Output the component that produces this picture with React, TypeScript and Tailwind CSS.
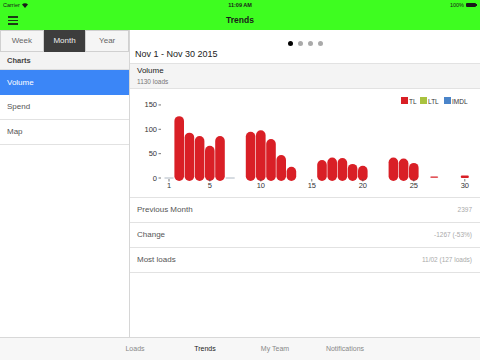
import React from "react";

const font = { fontFamily: '"Liberation Sans", Arial, sans-serif' };

// daily loads for Nov 2015 (0 = no bar)
const loads = [0, 127, 93, 86, 66, 86, 0, 0, 95, 98, 80, 47, 23, 0, 0, 37, 42, 41, 29, 25, 0, 0, 42, 40, 31, 0, 1, 0, 0, 3];
const greyLines = [1, 7];

const dayX = (d: number) => 39 + (d - 1) * 10.2;
const ZERO = 89;
const SCALE = 0.487;

function VolumeChart() {
  return (
    <svg width="350" height="108" viewBox="0 0 350 108" className="block">
      {[150, 100, 50, 0].map((v) => {
        const y = ZERO - v * SCALE;
        return (
          <g key={v}>
            <text x="27" y={y + 2.5} fontSize="7.5" textAnchor="end" fill="#333">
              {v}
            </text>
            <line x1="28.5" x2="31" y1={y} y2={y} stroke="#555" strokeWidth="0.8" />
          </g>
        );
      })}
      {greyLines.map((d) => (
        <line key={d} x1={dayX(d) - 4.5} x2={dayX(d) + 4.5} y1={ZERO} y2={ZERO} stroke="#9aa6b4" strokeWidth="0.8" />
      ))}
      {loads.map((v, i) => {
        if (!v) return null;
        const d = i + 1;
        const top = ZERO - v * SCALE;
        if (v < 5) {
          return <rect key={d} x={dayX(d) - 4} y={top - 1} width="8" height={d === 30 ? 2.5 : 1.2} rx="1" fill="#d91f26" />;
        }
        return <rect key={d} x={dayX(d) - 4.8} y={top} width="9.6" height={ZERO + 3 - top} rx="4.8" fill="#d91f26" />;
      })}
      {[1, 5, 10, 15, 20, 25, 30].map((d) => (
        <g key={d}>
          <line x1={dayX(d)} x2={dayX(d)} y1={ZERO + 1} y2={ZERO + 3.5} stroke="#555" strokeWidth="0.8" />
          <text x={dayX(d)} y={ZERO + 10} fontSize="7.5" textAnchor="middle" fill="#333">
            {d}
          </text>
        </g>
      ))}
      <g fontSize="6.5" fill="#333">
        <rect x="271" y="8" width="7" height="7" fill="#d91f26" />
        <text x="279" y="14.5">TL</text>
        <rect x="290" y="8" width="7" height="7" fill="#a9c23f" />
        <text x="298" y="14.5">LTL</text>
        <rect x="314" y="8" width="7" height="7" fill="#4a84c9" />
        <text x="322" y="14.5">IMDL</text>
      </g>
    </svg>
  );
}

function StatRow({ label, value }: { label: string; value: string }) {
  return (
    <div className="flex h-[25px] items-center justify-between border-b border-[#e2e2e2] pl-[7px] pr-[8px]">
      <span className="text-[8px] text-[#555]">{label}</span>
      <span className="text-[6.5px] text-[#aaa]">{value}</span>
    </div>
  );
}

export default function App() {
  const tabs = ["Loads", "Trends", "My Team", "Notifications"];
  return (
    <div className="flex h-[360px] w-[480px] flex-col overflow-hidden bg-white" style={font}>
      <div className="h-[30px] bg-[#3efd20]">
        <div className="relative flex h-[10px] items-center justify-between px-[3px] text-[5.5px] text-[#1a1a1a]">
          <span className="flex items-center gap-[2px]">
            Carrier
            <svg width="6" height="5" viewBox="0 0 6 5">
              <path d="M0 1.6 A4 4 0 0 1 6 1.6 L3 5 Z" fill="#1a1a1a" />
            </svg>
          </span>
          <span className="absolute left-1/2 -translate-x-1/2 font-bold">11:09 AM</span>
          <span className="flex items-center gap-[2px]">
            100%
            <span className="flex items-center">
              <span className="h-[4px] w-[10px] rounded-[1px] bg-[#1a1a1a]" />
              <span className="h-[2px] w-[1px] bg-[#1a1a1a]" />
            </span>
          </span>
        </div>
        <div className="relative flex h-[20px] items-center justify-center">
          <div className="absolute left-[8px] top-[6px] flex flex-col gap-[2px]">
            <span className="h-[1.5px] w-[10px] bg-[#1d3a16]" />
            <span className="h-[1.5px] w-[10px] bg-[#1d3a16]" />
            <span className="h-[1.5px] w-[10px] bg-[#1d3a16]" />
          </div>
          <span className="text-[8.5px] font-bold text-[#1a1a1a]">Trends</span>
        </div>
      </div>

      <div className="flex flex-1">
        <div className="w-[130px] border-r border-[#d6d6d6]">
          <div className="flex h-[22px] text-[8px]">
            <div className="flex flex-1 items-center justify-center border border-[#d0d0d0] bg-[#f5f5f5] text-[#666]">Week</div>
            <div className="flex flex-1 items-center justify-center bg-[#3d3d3d] text-[#eee]">Month</div>
            <div className="flex flex-1 items-center justify-center border border-[#d0d0d0] bg-[#f5f5f5] text-[#666]">Year</div>
          </div>
          <div className="flex h-[18px] items-center border-b border-[#ddd] bg-[#f3f3f3] pl-[7px] text-[7.5px] font-bold text-[#444]">
            Charts
          </div>
          <div className="flex h-[25px] items-center bg-[#3b86f7] pl-[7px] text-[8px] text-white">Volume</div>
          <div className="flex h-[25px] items-center border-b border-[#e2e2e2] pl-[7px] text-[8px] text-[#555]">Spend</div>
          <div className="flex h-[25px] items-center border-b border-[#e2e2e2] pl-[7px] text-[8px] text-[#555]">Map</div>
        </div>

        <div className="flex-1">
          <div className="flex h-[17px] items-end justify-center gap-[5px] pb-[1px]">
            <span className="h-[5px] w-[5px] rounded-full bg-black" />
            <span className="h-[5px] w-[5px] rounded-full bg-[#aaa]" />
            <span className="h-[5px] w-[5px] rounded-full bg-[#aaa]" />
            <span className="h-[5px] w-[5px] rounded-full bg-[#aaa]" />
          </div>
          <div className="flex h-[15px] items-center pl-[5px] text-[9px] text-[#222]">Nov 1 - Nov 30 2015</div>
          <div className="mt-[1px] border-t border-[#e2e2e2]">
            <div className="flex h-[25px] flex-col justify-center border-b border-[#e2e2e2] bg-[#f4f4f4] pl-[7px]">
              <span className="text-[8px] text-[#222]">Volume</span>
              <span className="text-[6.5px] text-[#777]">1130 loads</span>
            </div>
            <div className="border-b border-[#e2e2e2]">
              <VolumeChart />
            </div>
            <StatRow label="Previous Month" value="2397" />
            <StatRow label="Change" value="-1267 (-53%)" />
            <StatRow label="Most loads" value="11/02 (127 loads)" />
          </div>
        </div>
      </div>

      <div className="flex h-[23px] items-center border-t border-[#d8d8d8] bg-[#f7f7f7] text-[7px]">
        <div className="flex w-full justify-center">
          {tabs.map((t) => (
            <span key={t} className={`w-[70px] text-center ${t === "Trends" ? "text-[#222]" : "text-[#888]"}`}>
              {t}
            </span>
          ))}
        </div>
      </div>
    </div>
  );
}
